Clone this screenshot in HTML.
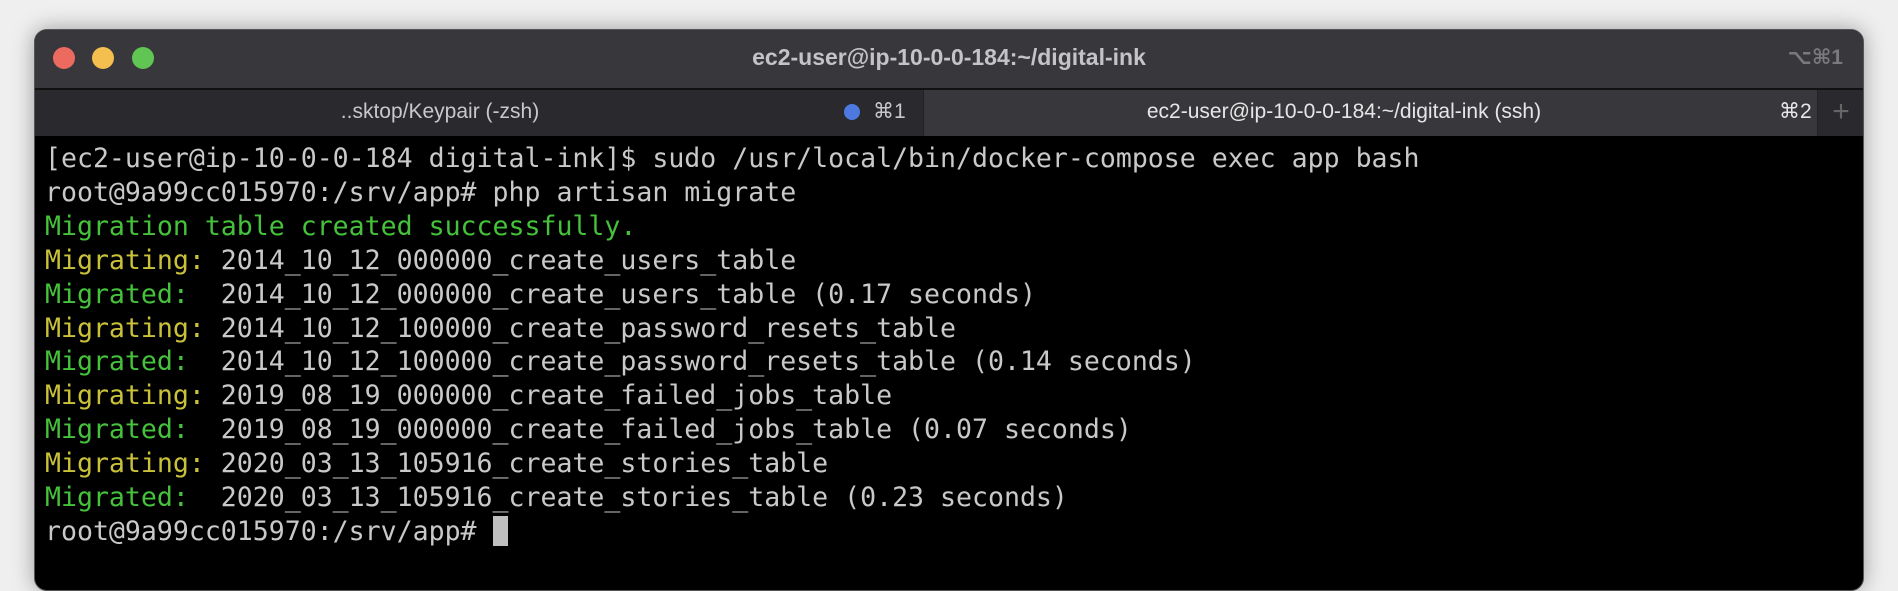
<!DOCTYPE html>
<html><head><meta charset="utf-8"><style>
html,body{margin:0;width:1898px;height:564px;overflow:hidden;background:#efefef}
.win{position:absolute;left:34px;top:29px;width:1828px;height:560px;border-radius:13px;background:#000;overflow:hidden;box-shadow:0 0 22px rgba(0,0,0,.35);border:1px solid #555}
.title{position:absolute;left:0;top:0;right:0;height:58px;background:#38373c}
.dot{position:absolute;top:17px;width:22px;height:22px;border-radius:50%}
.tt{position:absolute;left:0;right:0;top:14px;text-align:center;font:bold 23px "Liberation Sans",sans-serif;color:#c4c4c6}
.sc{position:absolute;right:20px;top:15px;font:bold 21px "Liberation Sans","DejaVu Sans",sans-serif;color:#7a797d}
.tabs{position:absolute;left:0;right:0;top:58px;height:46px;background:#2a292d;border-top:2px solid #111}
.tab{position:absolute;top:0;height:46px;font:21px "Liberation Sans","DejaVu Sans",sans-serif;color:#c8c8ca;line-height:44px}
.term{position:absolute;left:10px;top:104px;font:26.55px "DejaVu Sans Mono",monospace;color:#c9c9c9;line-height:33.9px;white-space:pre;padding-top:8px}
.y{color:#c9c13a}.g{color:#45c13b}
.cur{display:inline-block;width:15px;height:30px;background:#bfbfbf;vertical-align:-6px}
</style></head><body>
<div class="win">
 <div class="title">
  <div class="dot" style="left:18px;background:#ec6a5e"></div>
  <div class="dot" style="left:57px;background:#f4bf4f"></div>
  <div class="dot" style="left:97px;background:#61c554"></div>
  <div class="tt">ec2-user@ip-10-0-0-184:~/digital-ink</div>
  <div class="sc">⌥⌘1</div>
 </div>
 <div class="tabs">
  <div class="tab" style="left:0;width:888px;background:#2a292d">
   <span style="position:absolute;left:0;width:810px;text-align:center">..sktop/Keypair (-zsh)</span>
   <span style="position:absolute;left:809px;top:14px;width:16px;height:16px;border-radius:50%;background:#4d79e0"></span>
   <span style="position:absolute;left:838px">⌘1</span>
  </div>
  <div class="tab" style="left:888px;width:894px;background:#38373c;border-left:1px solid #222">
   <span style="position:absolute;left:0;width:840px;text-align:center;color:#e6e6e6">ec2-user@ip-10-0-0-184:~/digital-ink (ssh)</span>
   <span style="position:absolute;left:855px;color:#e6e6e6">⌘2</span>
  </div>
  <div class="tab" style="left:1782px;width:46px;background:#2a292d;border-left:1px solid #222;text-align:center;color:#666;font-size:30px">+</div>
 </div>
 <div class="term">[ec2-user@ip-10-0-0-184 digital-ink]$ sudo /usr/local/bin/docker-compose exec app bash
root@9a99cc015970:/srv/app# php artisan migrate
<span class="g">Migration table created successfully.</span>
<span class="y">Migrating:</span> 2014_10_12_000000_create_users_table
<span class="g">Migrated:</span>  2014_10_12_000000_create_users_table (0.17 seconds)
<span class="y">Migrating:</span> 2014_10_12_100000_create_password_resets_table
<span class="g">Migrated:</span>  2014_10_12_100000_create_password_resets_table (0.14 seconds)
<span class="y">Migrating:</span> 2019_08_19_000000_create_failed_jobs_table
<span class="g">Migrated:</span>  2019_08_19_000000_create_failed_jobs_table (0.07 seconds)
<span class="y">Migrating:</span> 2020_03_13_105916_create_stories_table
<span class="g">Migrated:</span>  2020_03_13_105916_create_stories_table (0.23 seconds)
root@9a99cc015970:/srv/app# <span class="cur"></span></div>
</div>
</body></html>
